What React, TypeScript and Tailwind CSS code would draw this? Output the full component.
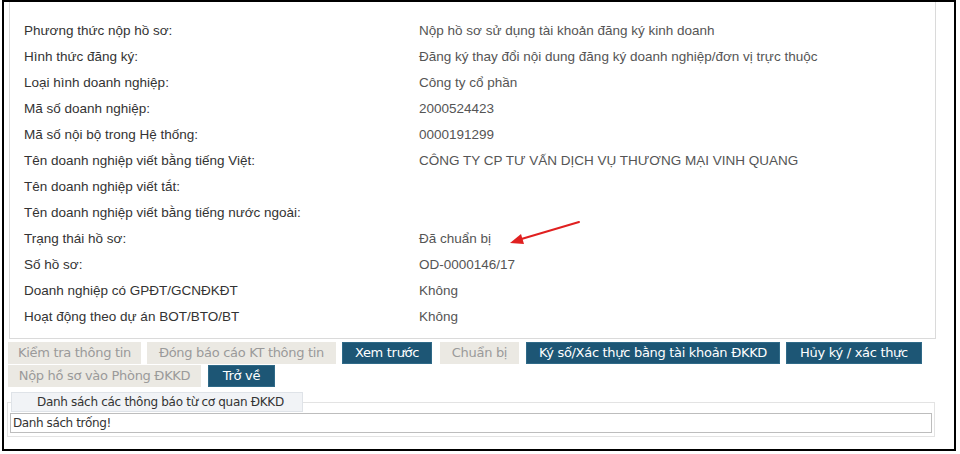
import React from "react";

const rows: [string, string][] = [
  ["Phương thức nộp hồ sơ:", "Nộp hồ sơ sử dụng tài khoản đăng ký kinh doanh"],
  ["Hình thức đăng ký:", "Đăng ký thay đổi nội dung đăng ký doanh nghiệp/đơn vị trực thuộc"],
  ["Loại hình doanh nghiệp:", "Công ty cổ phần"],
  ["Mã số doanh nghiệp:", "2000524423"],
  ["Mã số nội bộ trong Hệ thống:", "0000191299"],
  ["Tên doanh nghiệp viết bằng tiếng Việt:", "CÔNG TY CP TƯ VẤN DỊCH VỤ THƯƠNG MẠI VINH QUANG"],
  ["Tên doanh nghiệp viết tắt:", ""],
  ["Tên doanh nghiệp viết bằng tiếng nước ngoài:", ""],
  ["Trạng thái hồ sơ:", "Đã chuẩn bị"],
  ["Số hồ sơ:", "OD-0000146/17"],
  ["Doanh nghiệp có GPĐT/GCNĐKĐT", "Không"],
  ["Hoạt động theo dự án BOT/BTO/BT", "Không"],
];

function Btn({ label, dark, w }: { label: string; dark?: boolean; w: string }) {
  return (
    <div
      className={
        "h-[22px] flex items-center justify-center text-[13px] whitespace-nowrap " +
        w +
        (dark
          ? " bg-[#1d5675] text-white border border-[#2f6a88]"
          : " bg-[#ebe9e3] text-[#9a9a9a]")
      }
      style={{ fontFamily: '"DejaVu Sans", sans-serif', letterSpacing: "-0.3px" }}
    >
      {label}
    </div>
  );
}

export default function App() {
  return (
    <div className="bg-white w-[960px] h-[454px] pl-[2px]">
      <div className="w-[954px] h-[451px] border-2 border-black overflow-hidden pl-[5px] relative">
        {/* main info panel */}
        <div className="w-[927px] border-l border-r border-b border-[#dadada] pl-[14px] pt-[16px] pb-[8px]">
          {rows.map(([l, v], i) => (
            <div
              key={i}
              className="h-[26px] flex items-center text-[13.5px]"
              style={{ fontFamily: '"Liberation Sans", Arial, sans-serif' }}
            >
              <div className="w-[395px] text-[#333]">{l}</div>
              <div className="text-[#555]">{v}</div>
            </div>
          ))}
        </div>
        {/* buttons */}
        <div className="flex mt-[3px] -ml-[1px]">
          <Btn label="Kiểm tra thông tin" w="w-[133px]" />
          <div className="w-[6px]" />
          <Btn label="Đóng báo cáo KT thông tin" w="w-[189px]" />
          <div className="w-[6px]" />
          <Btn label="Xem trước" dark w="w-[90px]" />
          <div className="w-[8px]" />
          <Btn label="Chuẩn bị" w="w-[79px]" />
          <div className="w-[7px]" />
          <Btn label="Ký số/Xác thực bằng tài khoản ĐKKD" dark w="w-[254px]" />
          <div className="w-[6px]" />
          <Btn label="Hủy ký / xác thực" dark w="w-[136px]" />
        </div>
        <div className="flex gap-[7px] mt-[1px] -ml-[1px]">
          <Btn label="Nộp hồ sơ vào Phòng ĐKKD" w="w-[193px]" />
          <Btn label="Trở về" dark w="w-[67px]" />
        </div>
        {/* fieldset */}
        <div className="relative mt-[5px] -ml-[2px] w-[928px] h-[45px]">
          <div className="absolute left-0 right-0 top-[10px] bottom-0 border border-[#e3e3e3]" />
          <div
            className="absolute left-[4px] top-0 w-[292px] h-[20px] bg-[#f1f3f6] border border-[#dfe3e8] flex items-center pl-[25px] text-[12px] text-[#333]"
            style={{ fontFamily: '"DejaVu Sans", sans-serif', letterSpacing: "-0.3px" }}
          >
            Danh sách các thông báo từ cơ quan ĐKKD
          </div>
          <div
            className="absolute left-[3px] right-[3px] top-[21px] h-[20px] border border-[#bdbdbd] bg-white flex items-center pl-[2px] text-[12px] text-[#333]"
            style={{ fontFamily: '"DejaVu Sans", sans-serif', letterSpacing: "-0.4px" }}
          >
            Danh sách trống!
          </div>
        </div>
        {/* red arrow annotation */}
        <svg
          className="absolute left-[500px] top-[214px]"
          width="84"
          height="32"
          viewBox="0 0 84 32"
        >
          <line x1="75" y1="6" x2="14" y2="24" stroke="#e02020" strokeWidth="2" strokeLinecap="round" />
          <polygon points="6,27 17,18 20,28" fill="#e02020" />
        </svg>
      </div>
    </div>
  );
}
